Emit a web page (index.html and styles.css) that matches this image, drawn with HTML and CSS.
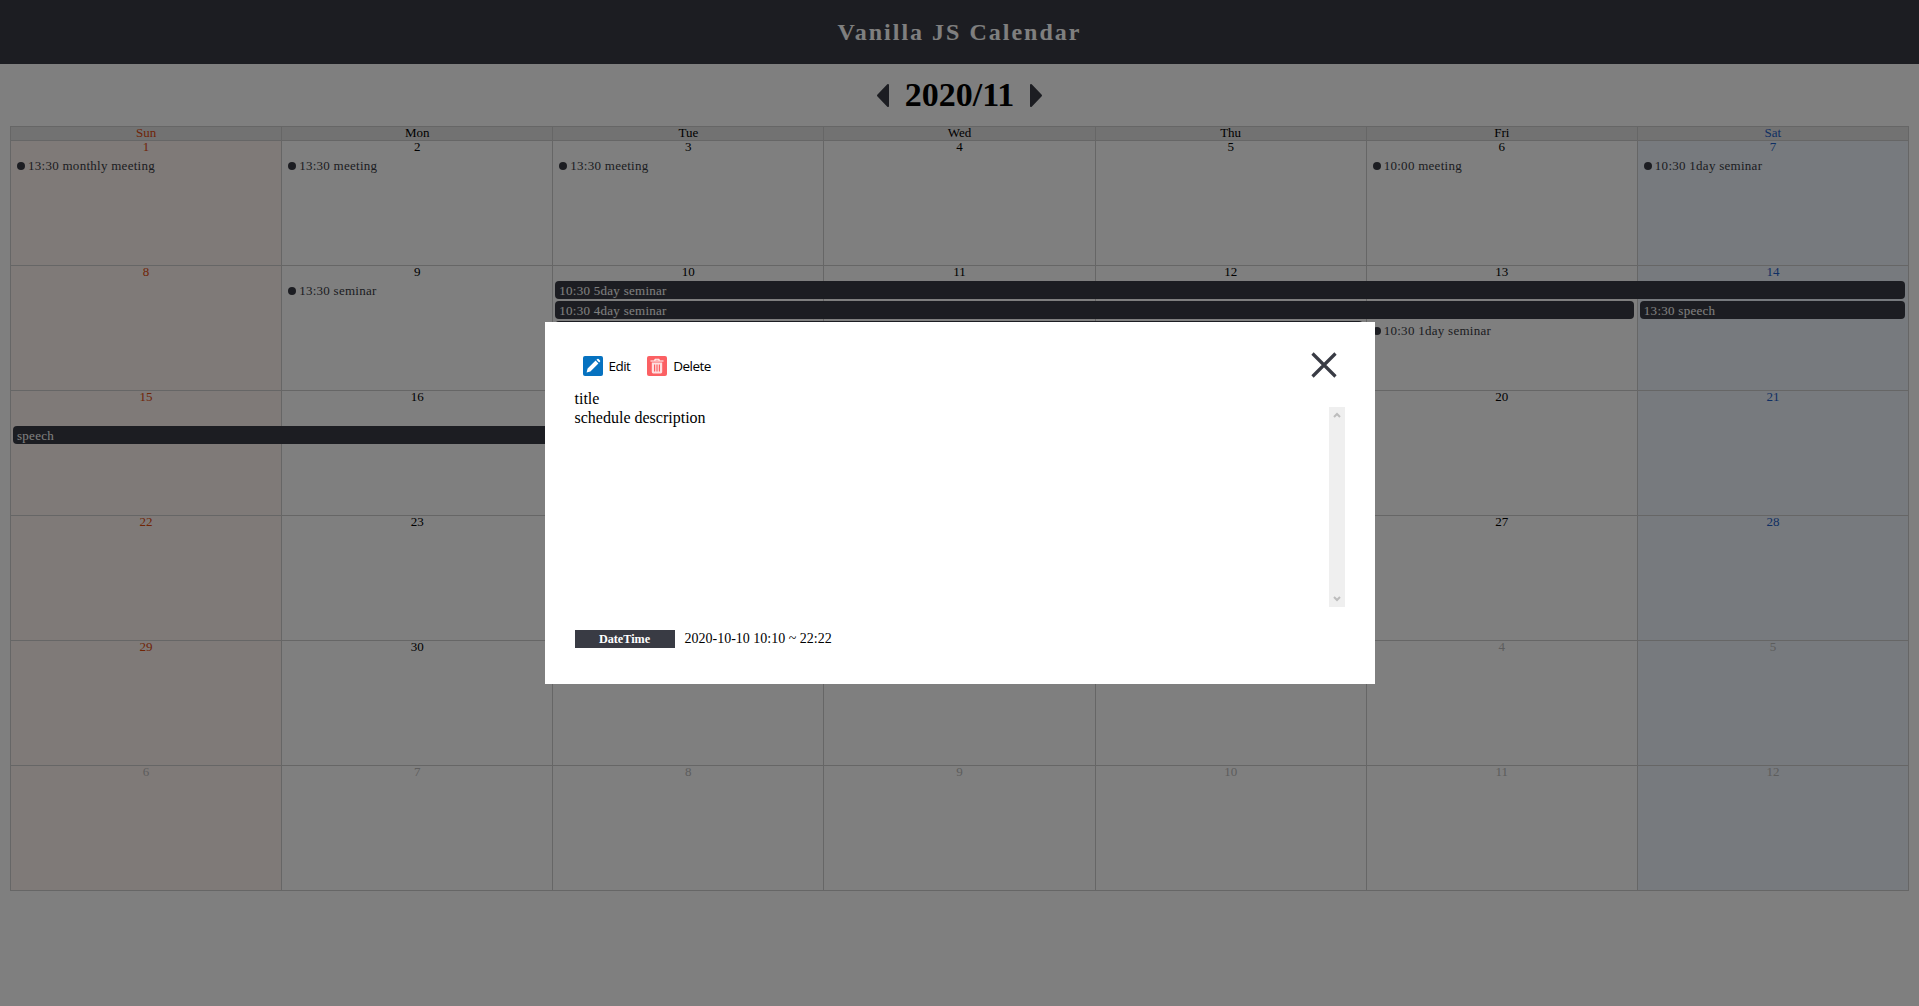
FILE: index.html
```html
<!DOCTYPE html>
<html lang="en">
<head>
<meta charset="utf-8">
<title>Vanilla JS Calendar</title>
<link rel="stylesheet" href="styles.css">
</head>
<body>
<header class="app-header"><h1 class="app-title">Vanilla JS Calendar</h1></header>
<nav class="month-nav">
  <button class="nav-btn" aria-label="Previous month"><svg width="14" height="25" viewBox="0 0 14 25"><path d="M12 2 L2 12.5 L12 23 Z"/></svg></button>
  <h2 class="month-label">2020/11</h2>
  <button class="nav-btn" aria-label="Next month"><svg width="14" height="25" viewBox="0 0 14 25"><path d="M2 2 L12 12.5 L2 23 Z"/></svg></button>
</nav>
<main class="calendar">
  <div class="weekdays">
    <div class="wd sun">Sun</div><div class="wd">Mon</div><div class="wd">Tue</div><div class="wd">Wed</div><div class="wd">Thu</div><div class="wd">Fri</div><div class="wd sat">Sat</div>
  </div>

  <section class="week">
    <div class="bg c1 sunbg"></div><div class="bg c2"></div><div class="bg c3"></div><div class="bg c4"></div><div class="bg c5"></div><div class="bg c6"></div><div class="bg c7 satbg"></div>
    <div class="num c1 red">1</div><div class="num c2">2</div><div class="num c3">3</div><div class="num c4">4</div><div class="num c5">5</div><div class="num c6">6</div><div class="num c7 blue">7</div>
    <div class="ev c1 s1"><i class="dot"></i>13:30 monthly meeting</div>
    <div class="ev c2 s1"><i class="dot"></i>13:30 meeting</div>
    <div class="ev c3 s1"><i class="dot"></i>13:30 meeting</div>
    <div class="ev c6 s1"><i class="dot"></i>10:00 meeting</div>
    <div class="ev c7 s1"><i class="dot"></i>10:30 1day seminar</div>
  </section>

  <section class="week">
    <div class="bg c1 sunbg"></div><div class="bg c2"></div><div class="bg c3"></div><div class="bg c4"></div><div class="bg c5"></div><div class="bg c6"></div><div class="bg c7 satbg"></div>
    <div class="num c1 red">8</div><div class="num c2">9</div><div class="num c3">10</div><div class="num c4">11</div><div class="num c5">12</div><div class="num c6">13</div><div class="num c7 blue">14</div>
    <div class="ev c2 s1"><i class="dot"></i>13:30 seminar</div>
    <div class="bar c3 to8 s1">10:30 5day seminar</div>
    <div class="bar c3 to7 s2">10:30 4day seminar</div>
    <div class="bar c7 to8 s2">13:30 speech</div>
    <div class="bar c3 to6 s3"></div>
    <div class="ev c6 s3"><i class="dot"></i>10:30 1day seminar</div>
  </section>

  <section class="week">
    <div class="bg c1 sunbg"></div><div class="bg c2"></div><div class="bg c3"></div><div class="bg c4"></div><div class="bg c5"></div><div class="bg c6"></div><div class="bg c7 satbg"></div>
    <div class="num c1 red">15</div><div class="num c2">16</div><div class="num c3">17</div><div class="num c4">18</div><div class="num c5">19</div><div class="num c6">20</div><div class="num c7 blue">21</div>
    <div class="bar c1 to4 s2">speech</div>
  </section>

  <section class="week">
    <div class="bg c1 sunbg"></div><div class="bg c2"></div><div class="bg c3"></div><div class="bg c4"></div><div class="bg c5"></div><div class="bg c6"></div><div class="bg c7 satbg"></div>
    <div class="num c1 red">22</div><div class="num c2">23</div><div class="num c3">24</div><div class="num c4">25</div><div class="num c5">26</div><div class="num c6">27</div><div class="num c7 blue">28</div>
  </section>

  <section class="week">
    <div class="bg c1 sunbg"></div><div class="bg c2"></div><div class="bg c3"></div><div class="bg c4"></div><div class="bg c5"></div><div class="bg c6"></div><div class="bg c7 satbg"></div>
    <div class="num c1 red">29</div><div class="num c2">30</div><div class="num c3 off">1</div><div class="num c4 off">2</div><div class="num c5 off">3</div><div class="num c6 off">4</div><div class="num c7 off">5</div>
  </section>

  <section class="week">
    <div class="bg c1 sunbg"></div><div class="bg c2"></div><div class="bg c3"></div><div class="bg c4"></div><div class="bg c5"></div><div class="bg c6"></div><div class="bg c7 satbg"></div>
    <div class="num c1 off">6</div><div class="num c2 off">7</div><div class="num c3 off">8</div><div class="num c4 off">9</div><div class="num c5 off">10</div><div class="num c6 off">11</div><div class="num c7 off">12</div>
  </section>
</main>

<div class="overlay">
  <div class="modal">
    <div class="modal-top">
      <div class="actions">
        <button class="action">
          <svg class="ico" width="20" height="20" viewBox="0 0 20 20"><rect width="20" height="20" rx="2" fill="#0672c0"/><path d="M3.6 16.4 L4.6 12.6 L12.6 4.6 L15.4 7.4 L7.4 15.4 Z M13.4 3.8 L14.4 2.9 Q15 2.5 15.6 3 L17 4.4 Q17.5 5 17.1 5.6 L16.2 6.6 Z" fill="#fff"/></svg>
          <span>Edit</span>
        </button>
        <button class="action">
          <svg class="ico" width="20" height="20" viewBox="0 0 20 20"><rect width="20" height="20" rx="2" fill="#fb6063"/><path d="M3.5 4.6 H7.4 V3.6 Q7.4 2.8 8.2 2.8 H11.8 Q12.6 2.8 12.6 3.6 V4.6 H16.5 V5.6 H3.5 Z M8.4 3.8 V4.6 H11.6 V3.8 Z" fill="#fff" fill-rule="evenodd"/><path d="M4.8 6.6 H15.2 V16 Q15.2 17.4 13.8 17.4 H6.2 Q4.8 17.4 4.8 16 Z M7 8.4 V15.6 H8.2 V8.4 Z M9.4 8.4 V15.6 H10.6 V8.4 Z M11.8 8.4 V15.6 H13 V8.4 Z" fill="#fff" fill-rule="evenodd" opacity=".8"/></svg>
          <span>Delete</span>
        </button>
      </div>
      <button class="close" aria-label="Close"><svg width="26" height="26" viewBox="0 0 26 26"><path d="M1.5 1.5 L24.5 24.5 M24.5 1.5 L1.5 24.5" stroke="#393b44" stroke-width="3.2" fill="none"/></svg></button>
    </div>
    <div class="modal-title">title</div>
    <div class="modal-body">
      <div class="desc">schedule description</div>
      <div class="scrollbar">
        <svg width="16" height="16" viewBox="0 0 16 16"><path d="M5 10 L8 7 L11 10" stroke="#bdbdbd" stroke-width="2" fill="none"/></svg>
        <svg width="16" height="16" viewBox="0 0 16 16"><path d="M5 6 L8 9 L11 6" stroke="#bdbdbd" stroke-width="2" fill="none"/></svg>
      </div>
    </div>
    <div class="modal-date">
      <span class="date-tag">DateTime</span>
      <span class="date-val">2020-10-10 10:10 ~ 22:22</span>
    </div>
  </div>
</div>
</body>
</html>
```

FILE: styles.css
```css
* { box-sizing: border-box; }
html, body { height: 100%; }
body {
  margin: 0;
  background: #fff;
  color: #000;
  font-family: "Liberation Serif", "Times New Roman", serif;
  overflow: hidden;
}
.app-header {
  height: 64px;
  background: #393b44;
  display: flex;
  align-items: center;
  justify-content: center;
}
.app-title {
  margin: 0;
  color: #fff;
  font-size: 24px;
  font-weight: bold;
  letter-spacing: 2px;
}
.month-nav {
  height: 62px;
  display: flex;
  align-items: center;
  justify-content: center;
  gap: 15px;
}
.nav-btn {
  border: 0;
  background: none;
  padding: 0;
  display: flex;
}
.nav-btn path {
  fill: #393b44;
  stroke: #393b44;
  stroke-width: 2;
  stroke-linejoin: round;
}
.month-label {
  margin: 0;
  font-size: 34px;
  font-weight: bold;
}
.calendar {
  margin: 0 10px;
  border-right: 1px solid #ccc;
  border-bottom: 1px solid #ccc;
  font-size: 13px;
}
.weekdays, .week {
  display: grid;
  grid-template-columns: repeat(7, 1fr);
}
.weekdays {
  height: 14px;
  background: #e4e4e4;
  border-top: 1px solid #ccc;
}
.wd {
  border-left: 1px solid #ccc;
  text-align: center;
  line-height: 12px;
}
.week {
  height: 125px;
  grid-template-rows: 15px 20px 20px 20px 1fr;
  border-top: 1px solid #ccc;
}
.bg {
  grid-row: 1 / -1;
  border-left: 1px solid #ccc;
}
.sunbg { background: #fff4f0; }
.satbg { background: #eef4fc; }
.c1 { grid-column-start: 1; }
.c2 { grid-column-start: 2; }
.c3 { grid-column-start: 3; }
.c4 { grid-column-start: 4; }
.c5 { grid-column-start: 5; }
.c6 { grid-column-start: 6; }
.c7 { grid-column-start: 7; }
.to4 { grid-column-end: 4; }
.to6 { grid-column-end: 6; }
.to7 { grid-column-end: 7; }
.to8 { grid-column-end: 8; }
.s1 { grid-row: 2; }
.s2 { grid-row: 3; }
.s3 { grid-row: 4; }
.num {
  grid-row: 1;
  text-align: center;
  line-height: 12px;
  padding-left: 1px;
}
.red, .sun { color: #e04a0c; }
.blue, .sat { color: #1f5fc8; }
.off { color: #bbb; }
.ev {
  height: 18px;
  line-height: 18px;
  margin: 1px 0 0 7px;
  letter-spacing: .27px;
  color: #393b44;
  white-space: nowrap;
  display: flex;
  align-items: center;
}
.dot {
  width: 8px;
  height: 8px;
  border-radius: 50%;
  background: #393b44;
  margin-right: 3px;
}
.bar {
  height: 18px;
  line-height: 19px;
  margin: 0 3px;
  padding-left: 4px;
  background: #393b44;
  border-radius: 4px;
  letter-spacing: .27px;
  color: #fff;
  white-space: nowrap;
  overflow: hidden;
}
.overlay {
  position: fixed;
  inset: 0;
  background: rgba(0, 0, 0, .5);
  display: flex;
  align-items: center;
  justify-content: center;
}
.modal {
  width: 830px;
  height: 362px;
  background: #fff;
  padding: 30px 30px 0;
}
.modal-top {
  display: flex;
  justify-content: space-between;
  align-items: center;
  height: 26px;
  margin-bottom: 12px;
  padding-left: 8px;
  padding-right: 8px;
}
.actions { display: flex; gap: 17px; padding-top: 2px; }
.action, .close {
  border: 0;
  background: none;
  padding: 0;
  display: flex;
  align-items: center;
}
.action { gap: 6px; font: 13.5px "Open Sans", sans-serif; letter-spacing: -.55px; color: #000; }
.modal-title {
  height: 17px;
  line-height: 18px;
  font-size: 16px;
}
.modal-body {
  height: 200px;
  display: flex;
  justify-content: space-between;
}
.desc {
  font-size: 16px;
  line-height: 18px;
  padding-top: 2px;
}
.scrollbar {
  width: 16px;
  background: #efefef;
  display: flex;
  flex-direction: column;
  justify-content: space-between;
}
.modal-date {
  margin-top: 23px;
  display: flex;
  align-items: center;
  height: 18px;
}
.date-tag {
  width: 100px;
  height: 18px;
  line-height: 18px;
  background: #393b44;
  color: #fff;
  font-size: 12.2px;
  font-weight: bold;
  text-align: center;
}
.date-val {
  margin-left: 10px;
  font-size: 14px;
}
```
